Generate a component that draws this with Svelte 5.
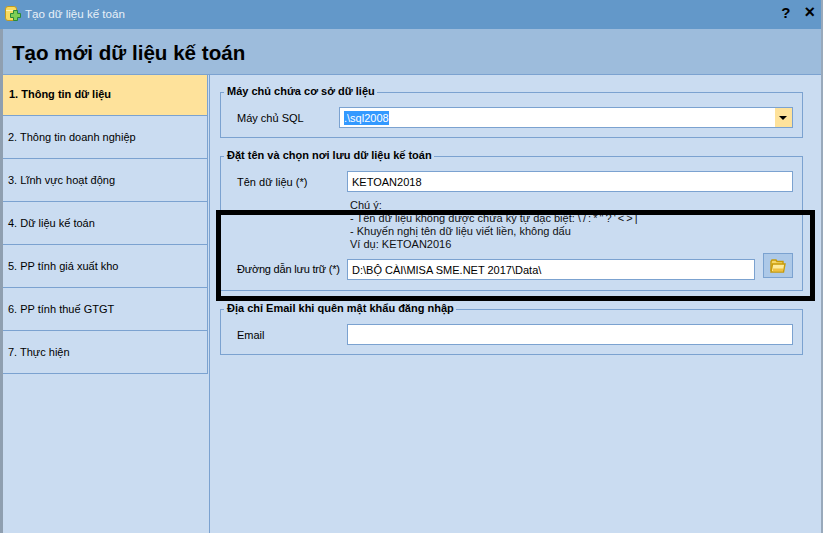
<script>
  const steps = [
    '1. Thông tin dữ liệu',
    '2. Thông tin doanh nghiệp',
    '3. Lĩnh vực hoạt động',
    '4. Dữ liệu kế toán',
    '5. PP tính giá xuất kho',
    '6. PP tính thuế GTGT',
    '7. Thực hiện'
  ];
</script>

<main class="window">
  <header class="titlebar">
    <svg class="app-icon" width="16" height="16" viewBox="0 0 16 16">
      <rect x="0.500" y="0.500" width="11" height="14" rx="2.500" fill="#f8dc62" stroke="#c09a22" />
      <path d="M1 4.500h10" stroke="#fff2b0" />
      <path d="M8.500 4.500h4v3h3v4h-3v3h-4v-3h-3v-4h3z" fill="#7fce55" stroke="#2a8a3a" />
    </svg>
    <span class="title">Tạo dữ liệu kế toán</span>
    <span class="controls"><b>?</b><b class="close">×</b></span>
  </header>

  <div class="frame">
    <h1>Tạo mới dữ liệu kế toán</h1>

    <div class="content">
      <nav class="steps">
        {#each steps as step, i}
          <div class="step" class:active={i === 0}>{step}</div>
        {/each}
      </nav>

      <section class="form">
        <fieldset class="server">
          <legend>Máy chủ chứa cơ sở dữ liệu</legend>
          <div class="row">
            <span class="label">Máy chủ SQL</span>
            <div class="field combo">
              <span class="selected">.\sql2008</span>
              <span class="arrow"></span>
            </div>
          </div>
        </fieldset>

        <fieldset class="naming">
          <legend>Đặt tên và chọn nơi lưu dữ liệu kế toán</legend>
          <div class="row">
            <span class="label">Tên dữ liệu (*)</span>
            <div class="field">KETOAN2018</div>
          </div>
          <div class="note">
            <div>Chú ý:</div>
            <div>- Tên dữ liệu không được chứa ký tự đặc biệt: <span class="chars">\ / : * " ? ' &lt; &gt; |</span></div>
            <div>- Khuyến nghị tên dữ liệu viết liền, không dấu</div>
            <div>Ví dụ: KETOAN2016</div>
          </div>
          <div class="row path-row">
            <span class="label">Đường dẫn lưu trữ (*)</span>
            <div class="field path">D:\BỘ CÀI\MISA SME.NET 2017\Data\</div>
            <button class="browse" aria-label="Chọn thư mục">
              <svg width="16" height="14" viewBox="0 0 16 14">
                <path d="M1 12V2.500L2 1h4l1 1.500h6V5" fill="#f5d667" stroke="#c79a08" stroke-width="1.400" />
                <path d="M1 13L2.500 5H15l-1.500 8z" fill="#fdeb9c" stroke="#c79a08" stroke-width="1.400" />
                <rect x="3" y="9.500" width="10" height="2.800" fill="#f0c040" />
              </svg>
            </button>
          </div>
        </fieldset>

        <fieldset>
          <legend>Địa chỉ Email khi quên mật khẩu đăng nhập</legend>
          <div class="row">
            <span class="label">Email</span>
            <div class="field"></div>
          </div>
        </fieldset>
      </section>
    </div>
  </div>

  <div class="highlight"></div>
</main>

<style>
  :global(body) {
    background: #fff;
  }

  .window {
    position: relative;
    display: flex;
    flex-direction: column;
    width: 823px;
    height: 533px;
    overflow: hidden;
    border-right: 2px solid #98a9bb;
    box-sizing: border-box;
    color: #000;
    font-family: "Liberation Sans", Arial, sans-serif;
    font-size: 11px;
  }

  .titlebar {
    display: flex;
    align-items: center;
    flex: none;
    height: 29px;
    padding: 0 6px 2px 5px;
    box-sizing: border-box;
    background: #6398c9;
  }

  .app-icon {
    flex: none;
    margin-right: 4px;
  }

  .title {
    color: #e8f0f8;
    font-size: 11.600px;
  }

  .controls {
    display: flex;
    align-items: center;
    gap: 14px;
    margin: 0 0 3px auto;
    font-size: 15px;
  }

  .close {
    font-size: 18px;
    line-height: 13px;
  }

  .frame {
    display: flex;
    flex: 1;
    flex-direction: column;
    min-height: 0;
    border-left: 3px solid #8f9fb0;
    background: #cadcf1;
  }

  h1 {
    flex: none;
    height: 46px;
    margin: 0;
    padding-left: 9px;
    box-sizing: border-box;
    border-bottom: 1px solid #7ba2d0;
    background: #9dbcdc;
    font-size: 20.600px;
    line-height: 47px;
  }

  .content {
    display: flex;
    flex: 1;
    min-height: 0;
  }

  .steps {
    flex: none;
    width: 205px;
    padding-right: 1px;
    border-right: 1px solid #7ba2d0;
  }

  .step {
    display: flex;
    align-items: center;
    height: 43px;
    padding-left: 5px;
    box-sizing: border-box;
    border-right: 1px solid #7ba2d0;
    border-bottom: 1px solid #7ba2d0;
  }

  .step.active {
    height: 41px;
    padding: 0 0 2px 6px;
    background: #fee29b;
    font-weight: bold;
  }

  .form {
    display: flex;
    flex: 1;
    flex-direction: column;
    gap: 11px;
    padding: 10px 18px 0 10px;
  }

  fieldset {
    flex: none;
    height: 53px;
    margin: 0;
    padding: 0 9px 0 16px;
    box-sizing: border-box;
    min-width: 0;
    border: 1px solid #7ba2d0;
  }

  legend {
    margin-left: -13px;
    padding: 0 2px 2px 3px;
    font-weight: bold;
    line-height: 12px;
  }

  fieldset.naming {
    height: 142px;
  }

  .row {
    display: flex;
    align-items: center;
    margin-top: 8px;
  }

  .label {
    flex: none;
    width: 110px;
  }

  .server .label {
    width: 102px;
  }

  .field {
    display: flex;
    align-items: center;
    flex: 1;
    height: 21px;
    padding-left: 4px;
    box-sizing: border-box;
    border: 1px solid #7ba2d0;
    background: #fff;
  }

  .combo {
    position: relative;
  }

  .selected {
    padding: 1px 0;
    background: #3399ff;
    color: #fff;
  }

  .arrow {
    position: absolute;
    top: 0;
    right: 0;
    width: 17px;
    height: 19px;
    background: #fee29b;
  }

  .arrow::after {
    content: "";
    position: absolute;
    top: 8px;
    left: 4px;
    border-top: 4px solid #000;
    border-right: 4px solid transparent;
    border-left: 4px solid transparent;
  }

  .note {
    margin: 7px 0 0 113px;
    line-height: 13px;
    color: #111;
  }

  .chars {
    letter-spacing: -0.500px;
  }

  .path-row {
    align-items: flex-end;
    margin-top: 2px;
  }

  .path-row .label {
    letter-spacing: -0.200px;
    line-height: 21px;
  }

  .path {
    flex: none;
    width: 408px;
  }

  .browse {
    width: 30px;
    height: 25px;
    margin: 0 0 2px 8px;
    padding: 0;
    border: 1px solid #7ba2d0;
    background: #adc9e8;
  }

  .browse svg {
    display: block;
    margin: 0 auto;
  }

  .highlight {
    position: absolute;
    top: 210px;
    left: 216px;
    width: 599px;
    height: 91px;
    box-sizing: border-box;
    border: 5px solid #000;
    pointer-events: none;
  }
</style>
